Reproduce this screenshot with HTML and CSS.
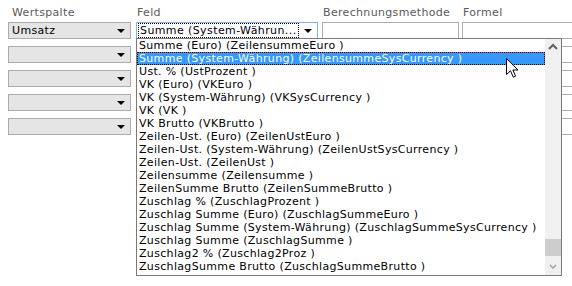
FILE: index.html
```html
<!DOCTYPE html>
<html>
<head>
	<title>Felder</title>
	<link rel="stylesheet" href="styles.css">
</head>
<body>
<div class="page">
	<div class="grid">
		<div class="lbl first">Wertspalte</div>
		<div class="lbl">Feld</div>
		<div class="lbl">Berechnungsmethode</div>
		<div class="lbl">Formel</div>

		<div class="combo grey"><span class="val">Umsatz</span><i class="arrow"></i></div>
		<div class="combo active"><span class="val focus">Summe (System-Währun...</span><i class="arrow"></i></div>
		<div class="box small"></div>
		<div class="box"></div>

		<div class="combo grey"><span class="val"></span><i class="arrow"></i></div>
		<div class="combo"><span class="val"></span><i class="arrow"></i></div>
		<div class="box small"></div>
		<div class="box"></div>

		<div class="combo grey"><span class="val"></span><i class="arrow"></i></div>
		<div class="combo"><span class="val"></span><i class="arrow"></i></div>
		<div class="box small"></div>
		<div class="box"></div>

		<div class="combo grey"><span class="val"></span><i class="arrow"></i></div>
		<div class="combo"><span class="val"></span><i class="arrow"></i></div>
		<div class="box small"></div>
		<div class="box"></div>

		<div class="combo grey"><span class="val"></span><i class="arrow"></i></div>
		<div class="combo"><span class="val"></span><i class="arrow"></i></div>
		<div class="box small"></div>
		<div class="box"></div>
	</div>

	<div class="listbox">
		<ul class="options">
			<li>Summe (Euro) (ZeilensummeEuro )</li>
			<li class="sel">Summe (System-Währung) (ZeilensummeSysCurrency )</li>
			<li>Ust. % (UstProzent )</li>
			<li>VK (Euro) (VKEuro )</li>
			<li>VK (System-Währung) (VKSysCurrency )</li>
			<li>VK (VK )</li>
			<li>VK Brutto (VKBrutto )</li>
			<li>Zeilen-Ust. (Euro) (ZeilenUstEuro )</li>
			<li>Zeilen-Ust. (System-Währung) (ZeilenUstSysCurrency )</li>
			<li>Zeilen-Ust. (ZeilenUst )</li>
			<li>Zeilensumme (Zeilensumme )</li>
			<li>ZeilenSumme Brutto (ZeilenSummeBrutto )</li>
			<li>Zuschlag % (ZuschlagProzent )</li>
			<li>Zuschlag Summe (Euro) (ZuschlagSummeEuro )</li>
			<li>Zuschlag Summe (System-Währung) (ZuschlagSummeSysCurrency )</li>
			<li>Zuschlag Summe (ZuschlagSumme )</li>
			<li>Zuschlag2 % (Zuschlag2Proz )</li>
			<li>ZuschlagSumme Brutto (ZuschlagSummeBrutto )</li>
		</ul>
		<div class="scroll">
			<svg class="sbtn" width="16" height="16" viewBox="0 0 16 16"><path d="M4 10 L8 6 L12 10" fill="none" stroke="#606060" stroke-width="2"/></svg>
			<div class="track"><div class="thumb"></div></div>
			<svg class="sbtn" width="16" height="16" viewBox="0 0 16 16"><path d="M5 6 L8 9 L11 6" fill="none" stroke="#9a9a9a" stroke-width="1.3"/></svg>
		</div>
	</div>

	<svg class="cursor" width="13" height="21" viewBox="0 0 13 21">
		<path d="M0.5 0.5 L0.5 16.5 L4.5 12.8 L7.3 19.2 L9.6 18.2 L6.9 12 L12 12 Z" fill="#fff" stroke="#000" stroke-width="1" stroke-linejoin="miter"/>
	</svg>
</div>
</body>
</html>
```

FILE: styles.css
```css
body {
	margin: 0;
	background: #fff;
	font-family: "DejaVu Sans", Verdana, sans-serif;
	font-size: 11px;
	letter-spacing: 0.33px;
	color: #000;
}

.page {
	position: relative;
	width: 572px;
	height: 286px;
	overflow: hidden;
}

.grid {
	display: grid;
	grid-template-columns: 128px 186px 140px 1fr;
	grid-template-rows: 15px;
	grid-auto-rows: 17px;
	row-gap: 7px;
	padding-left: 8px;
}

.lbl {
	color: #5a5a5a;
	line-height: 15px;
	padding-top: 5px;
	padding-left: 1px;
	white-space: nowrap;
}

.lbl.first {
	padding-left: 4px;
}

.combo {
	display: flex;
	align-items: center;
	box-sizing: border-box;
	width: 182px;
	height: 17px;
	border: 1px solid #acacac;
	background: #fff;
}

.combo.grey {
	width: 123px;
	background: #e5e5e5;
}

.combo.active {
	border-color: #7eb4ea;
}

.val {
	flex: 1;
	line-height: 13px;
	padding-left: 3px;
	white-space: nowrap;
}

.val.focus {
	flex: none;
	margin-left: 1px;
	padding: 0 1px;
	border: 1px dotted #000;
	letter-spacing: 0.4px;
}

.arrow {
	width: 0;
	height: 0;
	margin-left: auto;
	margin-right: 5px;
	border-left: 4px solid transparent;
	border-right: 4px solid transparent;
	border-top: 4px solid #000;
}

.box {
	box-sizing: border-box;
	width: 130px;
	height: 17px;
	border: 1px solid #abadb3;
	background: #fff;
}

.box.small {
	width: 137px;
}

.listbox {
	position: absolute;
	left: 136px;
	top: 38px;
	width: 426px;
	height: 238px;
	box-sizing: border-box;
	border: 1px solid #7a7a7a;
	background: #fff;
	display: flex;
	overflow: hidden;
}

.options {
	list-style-type: none;
	margin: 0;
	padding: 0;
	flex: 1;
}

.options li {
	height: 13px;
	line-height: 13px;
	padding-left: 2px;
	white-space: nowrap;
	box-sizing: border-box;
}

.options li.sel {
	background: #3399ff;
	color: #fff;
	border: 1px dotted #000;
	line-height: 11px;
	padding-left: 1px;
}

.scroll {
	width: 16px;
	background: #f0f0f0;
	display: flex;
	flex-direction: column;
}

.sbtn {
	display: block;
}

.track {
	flex: 1;
	display: flex;
	flex-direction: column;
	justify-content: flex-end;
	padding-bottom: 3px;
}

.thumb {
	height: 17px;
	background: #cdcdcd;
}

.cursor {
	position: absolute;
	left: 506px;
	top: 58px;
}
```
